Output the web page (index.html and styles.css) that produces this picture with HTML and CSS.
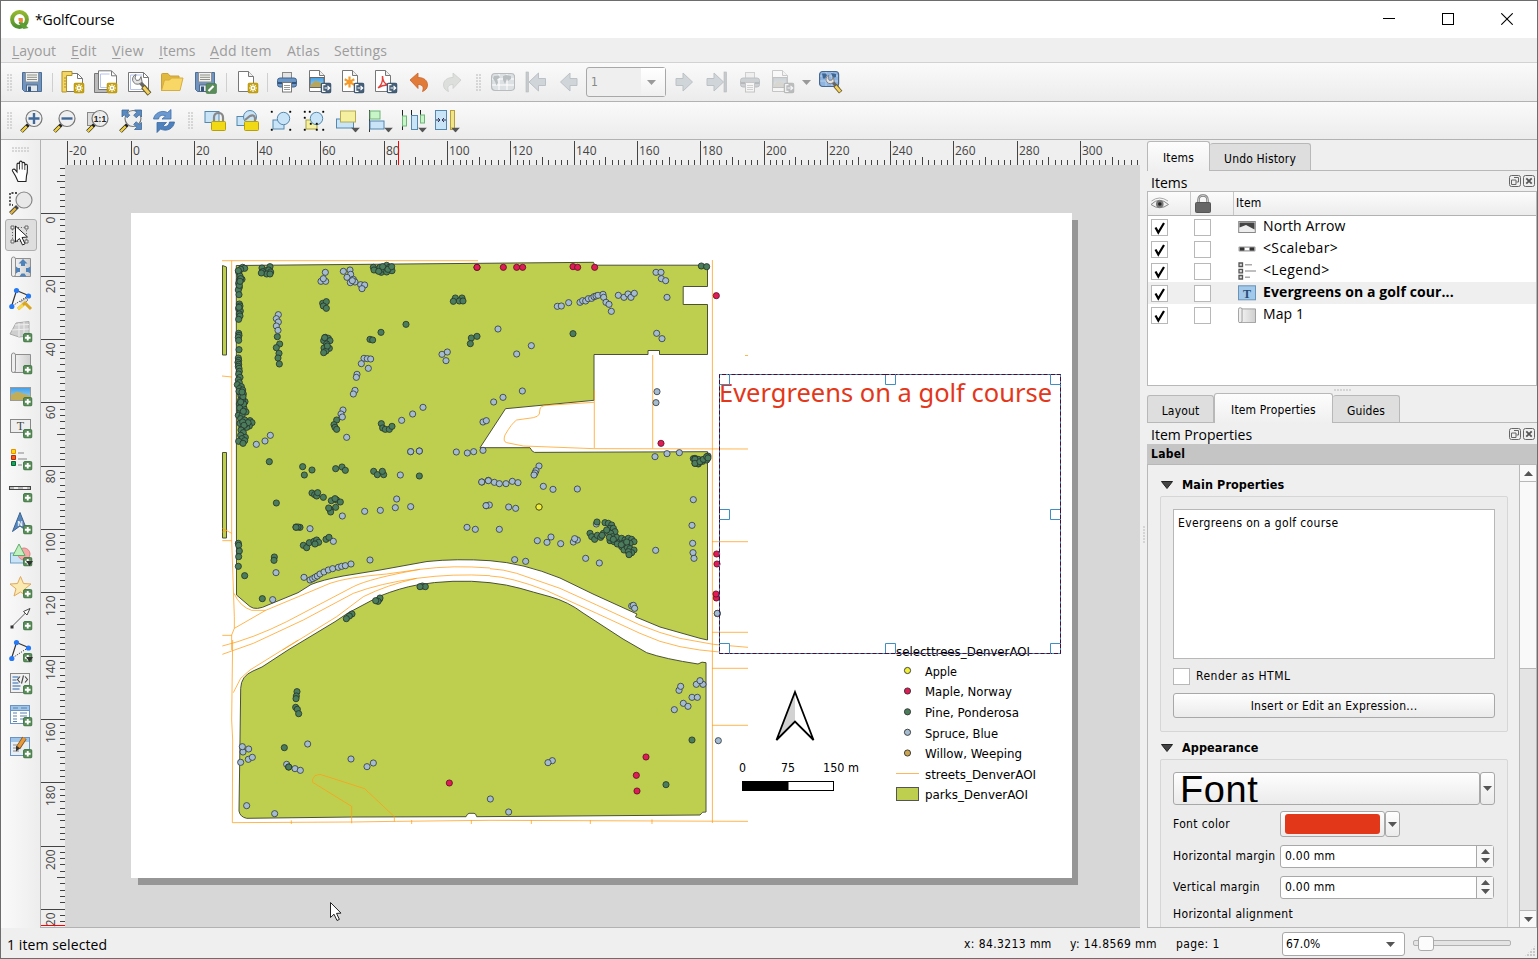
FILE: index.html
```html
<!DOCTYPE html>
<html lang="en">
<head>
<meta charset="utf-8">
<title>*GolfCourse</title>
<link rel="stylesheet" href="styles.css">
</head>
<body>
<svg class="defs" width="0" height="0">
  <defs>
    <linearGradient id="gPaper" x1="0" x2="1"><stop offset="0" stop-color="#f4f4f4"/><stop offset="1" stop-color="#cfcfcf"/></linearGradient>
    <linearGradient id="gSky" x1="0" x2="0" y1="0" y2="1"><stop offset="0" stop-color="#3f9fe8"/><stop offset="1" stop-color="#a8d8f8"/></linearGradient>
    <linearGradient id="gLeaf" x1="0" x2="0" y1="0" y2="1"><stop offset="0" stop-color="#93b82d"/><stop offset="1" stop-color="#4f9030"/></linearGradient>
    <symbol id="plus" viewBox="0 0 10 10"><rect x=".5" y=".5" width="9" height="9" rx="1.6" fill="#5a8c5a" stroke="#3f7744"/><path d="M5 2v6M2 5h6" stroke="#fff" stroke-width="2"/></symbol>
    <symbol id="spark" viewBox="0 0 11 11"><rect x=".5" y=".5" width="10" height="10" rx="1.6" fill="#c8a514" stroke="#b5930a"/><path d="M5.5 1.6v7.8M1.6 5.5h7.8M2.8 2.8l5.4 5.4M8.2 2.8L2.8 8.2" stroke="#fff" stroke-width="1.1"/><circle cx="5.5" cy="5.5" r="2" fill="#fff"/><circle cx="5.5" cy="5.5" r=".9" fill="#c8a514"/></symbol>
    <symbol id="export" viewBox="0 0 11 11"><rect x=".5" y=".5" width="10" height="10" rx="1.8" fill="#46607a" stroke="#36506a"/><path d="M5 2.2H2.2v6.6H5M4 5.5h5M7 3.4l2.2 2.1L7 7.6" stroke="#fff" stroke-width="1.2" fill="none"/></symbol>
    <symbol id="page" viewBox="0 0 24 24"><path d="M4.500 1.500h10l5 5v16h-15z" fill="#fff" stroke="#777"/><path d="M14.500 1.500v5h5" fill="#eee" stroke="#777"/></symbol>
    <symbol id="floppy" viewBox="0 0 24 24"><path d="M2.500 2.500h19v19h-17l-2-2z" fill="#7094bf" stroke="#4d6f96"/><rect x="5.500" y="2.500" width="13" height="9.500" fill="#f1f1ee" stroke="#8b9098"/><path d="M7 5h10M7 7.300h10M7 9.500h10" stroke="#8e8e88"/><rect x="6.500" y="15" width="11" height="6.500" fill="#e3e6ea" stroke="#506c8c"/><rect x="8" y="16.500" width="3" height="5" fill="#35547c"/></symbol>
    <symbol id="printer" viewBox="0 0 24 24"><rect x="7.500" y="2.500" width="9" height="7" fill="#e4e4e4" stroke="#888"/><rect x="2.500" y="8" width="19" height="9" rx="2.500" fill="#6b95c4" stroke="#3f6590"/><path d="M3 13h18" stroke="#34557e" stroke-width="2"/><rect x="7.500" y="12.500" width="9" height="9.500" fill="#fff" stroke="#777"/><path d="M9 15.500h6M9 17.500h6M9 19.500h6" stroke="#999"/></symbol>
    <symbol id="photo" viewBox="0 0 24 24"><rect x="3.500" y="8.500" width="14" height="10" fill="url(#gSky)" stroke="#666"/><path d="M4 16l5-4.500 8 3.500v3H4z" fill="#b8a75a"/></symbol>
    <symbol id="lens" viewBox="0 0 24 24"><path d="M1.500 22.500l7-7" stroke="#222" stroke-width="3.800"/><path d="M1.700 22.300l5-5" stroke="#f0cf3c" stroke-width="2.400"/><circle cx="14" cy="9.500" r="8" fill="#eee" fill-opacity=".88" stroke="#777" stroke-width="1.200"/></symbol>
    <symbol id="arrowL" viewBox="0 0 24 24"><path d="M2.500 12l9.500-9v5.500h7v7h-7V21z" fill="#d0d5d9" stroke="#bcc1c5"/></symbol>
    <symbol id="globe" viewBox="0 0 24 24"><rect x=".6" y="3.500" width="23" height="17" rx="3.500" fill="#dde1e4" stroke="#b9bcbf" stroke-width="1.200"/><path d="M1 9h22M1 15h22M8 4v16M16 4v16" stroke="#fff"/><path d="M3 6l5-.5 1 2-3 2 1 3-1.500 3-1.500-4-2-3zM12 6l3-1 5 1v3l-3 2-1-2-2 5-2-4z" fill="#b9bec1"/></symbol>
    <symbol id="wrench" viewBox="0 0 24 24"><path d="M11 9l8 9" stroke="#666" stroke-width="3.600"/><path d="M15 14.500l6.500 7.500" stroke="#665a28" stroke-width="5"/><path d="M15.500 15l5.500 6.500" stroke="#f3d262" stroke-width="3"/><path d="M8 2.500a5 5 0 1 0 6 7l-1-5-1.500 3.500-3 .5-1.500-2.500z" fill="#e4e4e4" stroke="#777"/></symbol>
    <symbol id="roll" viewBox="0 0 24 24"><path d="M4.500 3.500h17v18h-17z" fill="url(#gPaper)" stroke="#8f8f8f"/><path d="M2.500 20V4q0-2 2-2t2 2v15.500q0 2-2 2t-2-1.500z" fill="#eee" stroke="#8f8f8f"/></symbol>
    <symbol id="nodes" viewBox="0 0 24 24"><path d="M2.500 19.500L7.500 3.500 19.500 8.500" fill="none" stroke="#333" stroke-width="1.200"/><path d="M2.500 19.500l17-11" stroke="#222" stroke-dasharray="1 1.300"/><g fill="#2579f5"><circle cx="2.800" cy="19.500" r="2.600"/><circle cx="7.500" cy="3.500" r="2.600"/><circle cx="19.500" cy="9" r="2.600"/></g></symbol>
    <symbol id="drop" viewBox="0 0 9 5"><path d="M0 0h9L4.500 5z" fill="#555"/></symbol>
    <symbol id="check" viewBox="0 0 17 17"><path d="M4.500 8.500l2.800 5L13 4" fill="none" stroke="#000" stroke-width="2.200"/></symbol>
    <marker id="mPine" markerUnits="userSpaceOnUse" markerWidth="24" markerHeight="24" refX="12" refY="12"><circle cx="12" cy="12" r="9.300" fill="#4b7c5b" stroke="#26332c" stroke-width="2.400"/></marker>
    <marker id="mSpruce" markerUnits="userSpaceOnUse" markerWidth="24" markerHeight="24" refX="12" refY="12"><circle cx="12" cy="12" r="9.300" fill="#a5bbd0" stroke="#2e3940" stroke-width="2.400"/></marker>
    <marker id="mMaple" markerUnits="userSpaceOnUse" markerWidth="24" markerHeight="24" refX="12" refY="12"><circle cx="12" cy="12" r="9.300" fill="#e01b55" stroke="#551326" stroke-width="2.400"/></marker>
    <marker id="mApple" markerUnits="userSpaceOnUse" markerWidth="24" markerHeight="24" refX="12" refY="12"><circle cx="12" cy="12" r="9.300" fill="#f0ef35" stroke="#4a4a1c" stroke-width="2.400"/></marker>
  </defs>
</svg>

<div class="window">
  <header class="titlebar">
    <svg class="logo" viewBox="0 0 20 20"><circle cx="9.500" cy="9.500" r="7.400" fill="none" stroke="url(#gLeaf)" stroke-width="4"/><path d="M10.500 10.500l8 7.500-5 1-5-6z" fill="#5f9e33"/><path d="M8.500 8h4.200l.3 3.500-2 1.500-2.500-2.500z" fill="#f0883a"/></svg>
    <span class="title">*GolfCourse</span>
    <span class="winbtns">
      <svg viewBox="0 0 12 12"><path d="M0 5.500h12" stroke="#000"/></svg>
      <svg viewBox="0 0 12 12"><rect x=".5" y=".5" width="11" height="11" fill="none" stroke="#000"/></svg>
      <svg viewBox="0 0 12 12"><path d="M.3.3l11.400 11.400M11.700.3L.3 11.700" stroke="#000" stroke-width="1.100"/></svg>
    </span>
  </header>
  <nav class="menubar">
    <span class="m1"><u>L</u>ayout</span><span class="m2"><u>E</u>dit</span><span class="m3"><u>V</u>iew</span><span class="m4"><u>I</u>tems</span><span class="m5"><u>A</u>dd Item</span><span class="m6">Atlas</span><span class="m7">Settings</span>
  </nav>

  <div class="toolbar tb1">
    <i class="grip"></i>
    <svg class="ic" viewBox="0 0 24 24"><use href="#floppy"/></svg>
    <i class="sep s8"></i>
    <svg class="ic" viewBox="0 0 24 24"><path d="M4.500 3.500h12l5 5v13h-17z" fill="#fff" stroke="#777"/><path d="M16.500 3.500v5h5" fill="none" stroke="#777"/><path d="M1 1.500h10v4H5.500V22H1z" fill="#f2d66a" stroke="#b39322"/><path d="M3 8h2M3 11h2M3 14h2M3 17h2" stroke="#b39322"/><use href="#spark" x="12.500" y="12.500" width="11" height="11"/></svg>
    <svg class="ic" viewBox="0 0 24 24"><path d="M.5 3.500h18v19H.5z" fill="#bbb" stroke="#777"/><path d="M4.500.8h13l5 5v13.700h-18z" fill="#fff" stroke="#777"/><path d="M17.500.8v5h5" fill="none" stroke="#777"/><path d="M6.500 4h9M6.500 4v13.500h14" stroke="#b6c4ee" fill="none"/><use href="#spark" x="12.500" y="12.500" width="11" height="11"/></svg>
    <svg class="ic" viewBox="0 0 24 24"><path d="M1.500 2.500h15l5 5v14h-20z" fill="#fff" stroke="#777"/><path d="M16.500 2.500v5h5" fill="none" stroke="#777"/><path d="M3.500 5h12M3.500 5v14.500h16" stroke="#b6c4ee" fill="none"/><use href="#wrench" x="1" y="2"/></svg>
    <svg class="ic" viewBox="0 0 24 24"><path d="M1.500 21V4.500q0-1 1-1H8l2 2.500h9v4" fill="#e2b93f" stroke="#caa136"/><path d="M1.500 20.500L4.500 10h5l2-2H23l-3 12.500z" fill="#f9d767" stroke="#d6ad40"/></svg>
    <svg class="ic" viewBox="0 0 24 24"><use href="#floppy"/><rect x="13" y="13.500" width="10.500" height="10" rx="1.500" fill="#5a8c5a" stroke="#3f7744" stroke-width=".6"/><path d="M15.500 21l5-5" stroke="#fff" stroke-width="2.200"/></svg>
    <i class="sep s10"></i>
    <svg class="ic" viewBox="0 0 24 24"><path d="M2.500 1.500h10l5 5v15h-15z" fill="#fff" stroke="#777"/><path d="M12.500 1.500v5h5" fill="#eee" stroke="#777"/><use href="#spark" x="11.500" y="12.500" width="11" height="11"/></svg>
    <i class="sep s6"></i>
    <svg class="ic" viewBox="0 0 24 24"><use href="#printer"/></svg>
    <svg class="ic" viewBox="0 0 24 24"><use href="#page" x="-3" y="-1"/><use href="#photo" x="-1.500" y="-1"/><use href="#export" x="12.500" y="12.500" width="11" height="11"/></svg>
    <svg class="ic" viewBox="0 0 24 24"><use href="#page" x="-3" y="-1"/><path d="M8.500 6.500v11M3.700 9.200l9.600 5.600M13.300 9.200l-9.600 5.600" stroke="#f39a2b" stroke-width="2.200"/><use href="#export" x="12.500" y="12.500" width="11" height="11"/></svg>
    <svg class="ic" viewBox="0 0 24 24"><use href="#page" x="-3" y="-1"/><path d="M4 18c3-2 5-7 4.500-12 0 5 2 8 6 9-4-.5-7 .5-10.500 3" fill="none" stroke="#e2403a" stroke-width="1.500"/><use href="#export" x="12.500" y="12.500" width="11" height="11"/></svg>
    <svg class="ic" viewBox="0 0 24 24"><path d="M3 10l8-7v4.500c6 0 9.500 3 9.500 7.500 0 3-2 5.500-5 6.500 1.500-4 .5-7-4.500-7v4z" fill="#e07b39" stroke="#c9652a" stroke-width=".8"/></svg>
    <svg class="ic" viewBox="0 0 24 24"><path d="M21 10l-8-7v4.500c-6 0-9.500 3-9.500 7.500 0 3 2 5.500 5 6.500-1.500-4-.5-7 4.500-7v4z" fill="#dcdfdc" stroke="#cccfcc" stroke-width=".8"/></svg>
    <i class="grip mid"></i>
    <svg class="ic" viewBox="0 0 24 24"><use href="#globe"/></svg>
    <svg class="ic" viewBox="0 0 24 24"><rect x="2" y="2" width="2.500" height="20" fill="#c6cacd" stroke="#b4b8bb" stroke-width=".6"/><use href="#arrowL" x="2.500"/></svg>
    <svg class="ic" viewBox="0 0 24 24"><use href="#arrowL" x="1"/></svg>
    <span class="pagebox"><b>1</b><em><svg class="car" viewBox="0 0 9 5"><path d="M0 0h9L4.500 5z" fill="#9a9a9a"/></svg></em></span>
    <svg class="ic" viewBox="0 0 24 24"><use href="#arrowL" transform="translate(23 0) scale(-1 1)"/></svg>
    <svg class="ic" viewBox="0 0 24 24"><use href="#arrowL" transform="translate(21 0) scale(-1 1)"/><rect x="19" y="2" width="2.500" height="20" fill="#c6cacd" stroke="#b4b8bb" stroke-width=".6"/></svg>
    <svg class="ic faded" viewBox="0 0 24 24"><use href="#printer"/></svg>
    <svg class="ic faded" viewBox="0 0 24 24"><use href="#page" x="-3" y="-1"/><use href="#photo" x="-1.500" y="-1"/><use href="#export" x="12.500" y="12.500" width="11" height="11"/></svg>
    <span class="dd"><svg class="car" viewBox="0 0 9 5"><path d="M0 0h9L4.500 5z" fill="#999"/></svg></span>
    <svg class="ic" viewBox="0 0 24 24"><rect x=".6" y="1.500" width="19" height="15" rx="3" fill="#8fb4e0" stroke="#48698f" stroke-width="1.200"/><path d="M1 6h18M1 11h18M7 2v14M13 2v14" stroke="#c9dcf3" stroke-width=".7"/><path d="M3 3.500l4 0 1 2-2 3-2 0zM12 3l5 1v3l-3 1z" fill="#3f6793"/><g transform="translate(3 3) scale(.87)"><use href="#wrench" width="24" height="24"/></g></svg>
  </div>

  <div class="toolbar tb2">
    <i class="grip"></i>
    <svg class="ic" viewBox="0 0 24 24"><use href="#lens"/><path d="M14 4v11M8.500 9.500h11" stroke="#40699a" stroke-width="2.400"/></svg>
    <svg class="ic" viewBox="0 0 24 24"><use href="#lens"/><path d="M8.500 9.500h11" stroke="#40699a" stroke-width="2.400"/></svg>
    <svg class="ic" viewBox="0 0 24 24"><rect x="1.500" y="3.500" width="12" height="13" fill="#ddd" stroke="#888"/><use href="#lens"/><text x="14" y="13" class="ratio">1:1</text></svg>
    <svg class="ic" viewBox="0 0 24 24"><use href="#lens"/><g fill="#5b8ac0" stroke="#3f6898" stroke-width=".8"><path d="M3 1h7L7.800 3.200l3 3-2.600 2.600-3-3L3 8z"/><path d="M22.500 1v7l-2.200-2.200-3 3-2.600-2.600 3-3L15.500 1z"/><path d="M22.500 20.500h-7l2.200-2.200-3-3 2.600-2.600 3 3 2.200-2.200z"/></g></svg>
    <svg class="ic" viewBox="0 0 24 24"><path d="M1.500 10c1-6 8-9.500 14-6.500l3.500-3V10h-9l3.500-3C10 5 7 7 6.500 10z" fill="#6c9ad0" stroke="#3e6fab" stroke-width=".8"/><path d="M22.500 13c-1 7-8 10-14 7L5 23.500V13.500h9.500L11 17c3 1.500 6-.5 6.500-4z" fill="#4d80bd" stroke="#3a69a2" stroke-width=".8"/></svg>
    <i class="grip mid"></i>
    <svg class="ic" viewBox="0 0 24 24"><rect x="2" y="2.500" width="14" height="11" fill="#c9e3f7" stroke="#5588ad"/><path d="M11 13v-4.500q0-4.500 4.500-4.500t4.500 4.500V13" fill="none" stroke="#888" stroke-width="2.200"/><rect x="8.500" y="12.500" width="14" height="9" rx="1" fill="#f1d916" stroke="#b79f12"/></svg>
    <svg class="ic" viewBox="0 0 24 24"><rect x="1" y="7.500" width="12" height="9" fill="#c9e3f7" stroke="#5588ad"/><circle cx="14" cy="8" r="6.500" fill="#c9e3f7" stroke="#5588ad"/><path d="M9 11l5-4q4-2 5 2V13" fill="none" stroke="#888" stroke-width="2.200"/><rect x="8.500" y="12.500" width="14" height="9" rx="1" fill="#f1d916" stroke="#b79f12"/></svg>
    <svg class="ic" viewBox="0 0 24 24"><rect x="4" y="11" width="11" height="9" fill="#c9e3f7" stroke="#5588ad"/><circle cx="14.500" cy="9.500" r="6.200" fill="#c9e3f7" stroke="#5588ad"/><path d="M2 2h1.500v1.500H2zM20.500 2H22v1.500h-1.500zM2 20h1.500v1.500H2zM20.500 20H22v1.500h-1.500z" stroke="#111" stroke-width=".4"/></svg>
    <svg class="ic" viewBox="0 0 24 24"><rect x="4" y="11" width="11" height="9" fill="#f5f0a0" stroke="#a8a040"/><circle cx="14.500" cy="9.500" r="6.200" fill="#c9e3f7" stroke="#5588ad"/><path d="M2 2h1.500v1.500H2zM7 2h1.500v1.500H7zM20.500 2H22v1.500h-1.500zM2 20h1.500v1.500H2zM20.500 20H22v1.500h-1.500zM2 8h1.500v1.500H2zM14 14h1.500v1.500H14zM8 14h1.500v1.500H8zM14 20h1.500v1.500H14z" stroke="#111" stroke-width=".4"/></svg>
    <svg class="ic" viewBox="0 0 24 24"><rect x="1.500" y="10" width="17" height="9" fill="#c9e3f7" stroke="#5588ad"/><rect x="5.500" y="2" width="15" height="11" fill="#f5f0a0" stroke="#b5ad55"/><use href="#drop" x="16" y="18.500" width="9" height="5"/></svg>
    <svg class="ic" viewBox="0 0 24 24"><path d="M1.500 1v22" stroke="#333"/><rect x="2" y="2" width="10" height="8" fill="#c8f5c8" stroke="#6fb47a"/><rect x="2" y="12" width="14" height="8" fill="#c9e3f7" stroke="#5588ad"/><use href="#drop" x="16" y="18.500" width="9" height="5"/></svg>
    <svg class="ic" viewBox="0 0 24 24"><path d="M1.500 1v20M10.500 1v6M19.500 1v5" stroke="#222"/><rect x="1.500" y="7" width="4" height="10" fill="#c8f5c8" stroke="#6fb47a"/><rect x="10.500" y="6.500" width="6" height="14" fill="#c9e3f7" stroke="#5588ad"/><rect x="19.500" y="6" width="4" height="8" fill="#c8f5c8" stroke="#6fb47a"/><use href="#drop" x="17" y="18.500" width="9" height="5"/></svg>
    <svg class="ic" viewBox="0 0 24 24"><rect x="1.500" y="1.500" width="11" height="19" fill="#c9e3f7" stroke="#5588ad"/><path d="M2 11h4M4 9l2 2-2 2M12 11H8M10 9l-2 2 2 2" stroke="#335" fill="none"/><rect x="16.500" y="1.500" width="4" height="19" fill="#f0e58a" stroke="#b5a03a"/><use href="#drop" x="17" y="18.500" width="9" height="5"/></svg>
  </div>

  <div class="main">
    <aside class="tools">
      <i class="hgrip"></i>
      <span class="tool"><svg viewBox="0 0 24 24"><path d="M9 22.500L6.500 17 3.500 12c-.8-1.500 1.700-2.500 2.800-1.200L8 13V5.500c0-1.900 2.300-1.900 2.500 0V3.500c.2-1.900 2.500-1.700 2.700 0v1c.3-1.600 2.500-1.500 2.600.3v1.500c.5-1.500 2.500-1.300 2.600.4 0 4 .3 7-.9 10L17 22.500z" fill="#fff" stroke="#222" stroke-width="1.100"/><path d="M10.500 5.500v5M13.200 4.500v6M15.800 6v5" stroke="#333" stroke-width=".9"/></svg></span>
      <span class="tool"><svg viewBox="0 0 24 24"><path d="M8 2H1v12h3" fill="none" stroke="#111" stroke-dasharray="2 1.500" stroke-width="1.300"/><path d="M1.500 22.500l7-7" stroke="#444" stroke-width="4"/><path d="M1.700 22.300l5-5" stroke="#e0b53c" stroke-width="2.400"/><circle cx="15" cy="9" r="8" fill="#e9e9e9" stroke="#888" stroke-width="1.200"/></svg></span>
      <span class="tool on"><svg viewBox="0 0 24 24"><rect x="3.500" y="4.500" width="14" height="14" fill="none" stroke="#555" stroke-dasharray="1 1.800"/><path d="M2 3h3v3H2zM16 3h3v3h-3zM2 17h3v3H2zM16 17h3v3h-3z" fill="#eee" stroke="#666"/><path d="M6.500 3v16l4-3.500 3 6.500 2.500-1.200-3-6.300 5.500-.5z" fill="#fff" stroke="#222"/></svg></span>
      <span class="tool"><svg viewBox="0 0 24 24"><use href="#roll"/><g fill="#4e82b8"><path d="M14 4l4.500 4.500H16V11h-4V8.500H9.500zM7 11.500l2 1.500h2v4H9l-2 1.500zM21.500 11.500L19 13h-2v4h2l2.500 1.500zM10.500 21.500l2-3h3l2 3z"/></g></svg></span>
      <span class="tool"><svg viewBox="0 0 24 24"><use href="#nodes"/><path d="M11 15l6-4 2 2-5 5" fill="#ddd" stroke="#888"/><path d="M9 22l7-6 6 6" fill="none" stroke="#d9a520" stroke-width="3"/><path d="M9 22l5-4" stroke="#f6d74e" stroke-width="3"/></svg></span>
      <span class="tool"><svg viewBox="0 0 24 24"><path d="M1 15L7 4l13-1.500V17l-10 1z" fill="#cfcfcf" stroke="#aaa"/><path d="M3 11l17-1M6 6l14-.5M10 4v14M15 3v14" stroke="#eee" fill="none"/><use href="#plus" x="14" y="14" width="9.500" height="9.500"/></svg></span>
      <span class="tool"><svg viewBox="0 0 24 24"><use href="#roll"/><use href="#plus" x="14" y="14" width="9.500" height="9.500"/></svg></span>
      <span class="tool"><svg viewBox="0 0 24 24"><rect x="1.500" y="4.500" width="20" height="13" fill="url(#gSky)" stroke="#999"/><path d="M2 12l6-3.500 13.500 4.500v4H2z" fill="#c2ad59"/><use href="#plus" x="14" y="14" width="9.500" height="9.500"/></svg></span>
      <span class="tool"><svg viewBox="0 0 24 24"><rect x="1.500" y="4.500" width="20" height="13" fill="#eee" stroke="#888"/><text x="11.500" y="15" class="tglyph">T</text><use href="#plus" x="14" y="14" width="9.500" height="9.500"/></svg></span>
      <span class="tool"><svg viewBox="0 0 24 24"><path d="M2.500 2.500h4v4h-4z" fill="#fddb0b" stroke="#e89000"/><path d="M2.500 8.500h4v4h-4z" fill="#f25a15" stroke="#b72c08"/><path d="M2.500 14.500h4v4h-4z" fill="#17a45c" stroke="#0b6333"/><path d="M9 6h6M9 12h9M9 18h4" stroke="#aaa" stroke-width="1.500"/><use href="#plus" x="14" y="14" width="9.500" height="9.500"/></svg></span>
      <span class="tool"><svg viewBox="0 0 24 24"><rect x=".5" y="7.500" width="21" height="3" fill="#bbb" stroke="#444"/><path d="M5 9h4M14 9h4" stroke="#fff" stroke-width="1.500"/><use href="#plus" x="14" y="14" width="9.500" height="9.500"/></svg></span>
      <span class="tool"><svg viewBox="0 0 24 24"><path d="M11 1.500l7.500 19L11 15l-7.500 5.500z" fill="#5a87bb" stroke="#3a6391"/><text x="11" y="14.500" class="nglyph">N</text><use href="#plus" x="14" y="14" width="9.500" height="9.500"/></svg></span>
      <span class="tool"><svg viewBox="0 0 24 24"><rect x="1.500" y="10" width="13" height="10" fill="#c9e3f7" stroke="#6ea0c4"/><circle cx="15" cy="11" r="6" fill="#f6a8a8" stroke="#d98282"/><path d="M10 1l6 11.500H4z" fill="#c0f0c0" stroke="#62ac6c"/><use href="#plus" x="14" y="14" width="9.500" height="9.500"/><path d="M17 18h7l-3.500 5z" fill="#333"/></svg></span>
      <span class="tool"><svg viewBox="0 0 24 24"><path d="M11.500 1.500l3 7 7.500.5-6 4.800 2 7.200-6.500-4-6.500 4 2-7.200L1 9l7.500-.5z" fill="#fae9b0" stroke="#e0a95c"/><use href="#plus" x="14" y="14" width="9.500" height="9.500"/></svg></span>
      <span class="tool"><svg viewBox="0 0 24 24"><path d="M2.500 20L19 3.500" stroke="#555"/><path d="M21 1.500l-6.500 3 3.500 3.500z" fill="#fff" stroke="#444"/><rect x="1.500" y="18.500" width="3" height="3" fill="#333"/><use href="#plus" x="14" y="14" width="9.500" height="9.500"/></svg></span>
      <span class="tool"><svg viewBox="0 0 24 24"><use href="#nodes"/><use href="#plus" x="14" y="14" width="9.500" height="9.500"/><path d="M17 18h7l-3.500 5z" fill="#333"/></svg></span>
      <span class="tool"><svg viewBox="0 0 24 24"><rect x="1.500" y="2.500" width="19" height="19" fill="#f1f1f1" stroke="#888"/><path d="M3.500 6h6M3.500 9h4M3.500 12h6M3.500 15h8M3.500 18h7" stroke="#6a93c4" stroke-width="1.700"/><path d="M11 5.500L8.500 8.500l2.500 3M16 5.500l2.500 3-2.500 3M14.500 4.500l-2 8" fill="none" stroke="#444" stroke-width="1.100"/><use href="#plus" x="14" y="14" width="9.500" height="9.500"/></svg></span>
      <span class="tool"><svg viewBox="0 0 24 24"><rect x="1.500" y="2.500" width="19" height="18" fill="#fff" stroke="#6a93c4"/><rect x="2" y="3" width="18" height="4" fill="#9fc6e8"/><path d="M2 7.500h18" stroke="#6a93c4"/><path d="M4 5h5M12 5h6M4 10h4M11 10h7M4 13h4M11 13h7M4 16h4M11 16h4M4 18.500h4" stroke="#5c82ad" stroke-width="1.200"/><use href="#plus" x="14" y="14" width="9.500" height="9.500"/></svg></span>
      <span class="tool"><svg viewBox="0 0 24 24"><rect x="1.500" y="2.500" width="19" height="18" fill="#e9eef3" stroke="#6a93c4"/><rect x="2" y="3" width="18" height="4" fill="#9fc6e8"/><path d="M4 10h5M4 13h4M4 16h6" stroke="#888"/><path d="M15.500 3L9 13" stroke="#80501c" stroke-width="5"/><path d="M15.500 3L9.500 12" stroke="#e69a3c" stroke-width="3.200"/><path d="M7 11l4 2.500-4 3z" fill="#333"/><use href="#plus" x="14" y="14" width="9.500" height="9.500"/></svg></span>
    </aside>

    <section class="stage">
      <svg class="ruler-h" id="rulerH" viewBox="41 140 1099 25"></svg>
      <svg class="ruler-v" id="rulerV" viewBox="41 165 24 763"></svg>
      <svg class="canvas" viewBox="65 165 1075 763">
        <rect x="138" y="220" width="940" height="665" fill="#969696"/>
        <rect x="131" y="213" width="941" height="665" fill="#fff"/>
        <g class="park">
          <path d="M236.300 265.500L481 263.300 593.500 262.300 594.500 265.200H707.500V286.500H683.200V304.500H707.500V354.500H659.500V350.500H648V354.500H594V400.300L505.500 408.700 480 447.700H530Q532 452 534.500 452.400L707.500 451.700V640L700 638.300 660 627 635.500 616.800 637 614 593 594 560 578Q523 563 490 560.700T427 561.500L380 570 343 576Q322 580 311 584.500L298 592.700 268 605Q256 611 250 606.500L236.500 595Z"/>
          <path d="M288 650L335 621.700 348 613 380 596Q400 588 417 585T453 581.300 490 582.700 520 588.300 550 596.700 583 613L623 639 646.700 652.700Q665 659 698 664Q702 661 706 662.700V812Q702 811 700 815L476.700 816.700Q476 813.300 474 813.300H469Q467 814 466 816.700L353 817 246.700 818.300Q240 817 239 811L240 740 240.700 688.300Q241 676 253 671L262 667Z"/>
          <path d="M222.500 265.500L226.500 267V355H222.500ZM222.500 452.500H226.500V538H222.500Z"/>
        </g>
        <g class="street">
          <path d="M222 260.700H478M712.400 260V823M594.300 390V448M652.700 355V448.500M712 541.700H748M712 632.300H748M712 668.300H748M712 725.300H748M745 355.500H748M222 376L232 377"/>
          <g transform="translate(480 250) scale(.33333)"><path d="M342 457L200 466Q180 468 180 478L178 492Q175 500 160 503L110 510Q95 520 75 555Q68 575 80 578L130 588 342 596 804 597"/></g>
          <g transform="translate(220 450) scale(.33333)"><path d="M35-568V270L43 500V535L35 555V600M42 430Q60 470 95 481H137L235 440 330 400Q380 382 500 372L600 358Q700 345 810 354M7 588Q100 565 200 515L400 410Q450 385 600 358M7 613L100 580 250 510 400 430Q480 400 590 385T810 377M188 600L350 500 430 440Q500 405 590 385M43 535L137 481M7 556H35M7 272H35M7 235L35 250M7 246L22 240"/></g>
          <g transform="translate(480 450) scale(.33333)"><path d="M30 356Q70 358 110 370L240 415 350 465 480 525Q540 550 600 565L700 583 804 592M30 378Q90 380 200 422L350 490 480 550Q540 578 600 590T718 606"/></g>
          <g transform="translate(220 640) scale(.33333)"><path d="M38 0L35 240 38 300 37 548 400 546 530 544 810 541 1584 544M40 158L62 115 90 90 235 0M278 427Q274 418 285 407L300 403 434 446 523 530V545M278 427L395 499V550M214 541V552M575 540V552M754 540V552M934 540V552M1111 540V552M1296 538V552"/></g>
        </g>
        <g transform="translate(220 250) scale(.33333)" class="trees">
          <polyline class="pine" points="68,52 74,55 62,58 56,66 66,88 60,78 55,62 58,90 62,86 56,100 58,112 55,120 57,134 58,106 60,94 58,162 60,168 56,176 61,183 58,192 60,198 57,172 56,208 56,250 57,256 55,262 56,271 57,299 55,324 56,331 54,337 56,343 55,349 57,355 58,364 56,372 60,382 55,390 58,398 52,404 64,410 58,416 68,420 60,428 70,432 63,438 75,455 62,450 68,446 58,462 65,468 72,475 60,482 78,486 55,496 66,497 57,424 69,440 66,426 71,462 62,456 59,474 70,484 62,506 74,510 90,512 96,518 88,528 80,532 66,530 76,522 84,518 60,520 68,516 72,526 63,540 70,548 62,556 76,562 66,566 74,572 56,574 69,580"/>
          <polyline class="pine" points="126,54 138,62 150,50 146,60 152,66 128,65 140,72 150,72 124,69 308,160 319,155 310,168 319,175 172,260 179,282 169,293 177,310 174,324 178,342 316,262 325,265 330,272 311,272 320,282 328,295 312,294 318,303 311,308 322,288 314,263 450,268 458,270 483,247 558,223 706,144 726,144 718,153 729,153 700,154 754,264 771,259 751,281 350,510 342,524 345,532 350,538 484,521 488,534 496,538 508,538 516,529 460,52 470,60 480,52 484,67 492,58 500,46 508,52 512,60 500,66 516,62 462,60 476,64 488,50 504,58 515,50"/>
          <polyline class="spruce" points="316,67 303,94 317,94 310,86 370,64 390,60 392,73 381,82 400,88 405,96 391,98 397,92 422,104 434,105 426,116 175,194 169,206 175,216 169,228 174,241 432,325 442,326 452,327 424,341 445,355 411,373 409,382 405,421 400,432 369,480 363,492 367,501 380,562 545,511 578,492 609,472 109,583 135,573 151,556 572,605 598,603 709,606 742,609 761,605 789,516 799,512 789,601 666,313 682,306 678,332"/>
          <polyline class="maple" points="771,52 771,52"/>
        </g>
        <g transform="translate(480 250) scale(.33333)" class="trees">
          <polyline class="maple" points="70,52 110,52 128,52 279,50 293,52 344,52 709,137 543,580"/>
          <polyline class="pine" points="664,48 680,50 279,251 640,626 650,632 645,640 660,630 655,642 668,634 676,628 682,624 684,618 680,630 645,625 654,628"/>
          <polyline class="spruce" points="528,67 543,67 544,86 557,92 561,142 530,250 546,266 232,169 244,168 266,158 300,157 308,152 317,153 325,146 335,145 342,140 348,138 354,136 369,133 371,142 378,157 387,163 394,184 415,136 432,142 444,132 453,142 463,130 54,237 154,287 110,312 127,423 69,442 41,456 531,425 528,458 525,620 561,611 598,608"/>
        </g>
        <g transform="translate(220 450) scale(.33333)" class="trees">
          <polyline class="pine" points="148,35 248,50 276,60 253,75 347,56 366,51 376,61 461,64 472,74 491,74 487,64 598,78 169,159 276,129 284,134 290,138 293,128 310,142 334,152 350,150 361,156 345,146 347,172 330,178 332,186 326,174 228,231 240,232 234,231 228,232 55,280 56,286 58,303 56,320 55,349 74,377 127,446 163,321 162,331 250,286 260,293 268,278 282,274 290,270 296,277 285,282 318,268 327,262 607,408 616,410 600,410 478,448 480,444 474,454 467,452 396,492 388,498 379,506"/>
          <polyline class="spruce" points="541,75 530,147 526,173 572,170 481,181 434,184 367,198 270,236 340,274 450,330 168,368 252,382 158,449 270,390 278,386 285,382 292,378 300,372 312,366 325,360 338,356 355,352 365,349 376,347 393,342 741,232 766,238 786,96 805,91 799,167 572,5 598,3"/>
        </g>
        <g transform="translate(480 450) scale(.33333)" class="trees">
          <polyline class="spruce" points="177,48 168,62 165,69 162,75 25,92 43,97 58,101 78,101 97,94 114,98 190,109 219,118 292,117 28,165 18,167 86,171 107,175 58,238 172,272 201,277 213,261 242,281 280,276 292,270 284,266 317,325 358,339 527,301 640,149 636,226 638,280 639,308 642,325 104,329 137,334 455,468 460,466 464,475 712,491 712,490 349,222 5,96"/>
          <polyline class="apple" points="177,171 177,171"/>
          <polyline class="pine" points="351,216 375,218 385,220 395,225 390,235 400,235 405,245 392,250 330,250 335,260 344,268 352,256 362,262 370,250 380,240 398,260 390,272 402,275 410,262 420,275 425,265 435,270 445,265 455,268 462,275 450,280 440,285 425,290 432,300 442,292 450,296 462,300 455,308 445,305 447,314 388,262 400,268 412,282 430,280 424,284 440,276 366,256 645,28 655,40 645,40 660,35 670,28 680,20 684,24"/>
          <polyline class="maple" points="710,312 711,342 709,444 708,432"/>
        </g>
        <g transform="translate(220 640) scale(.33333)" class="trees">
          <polyline class="pine" points="231,155 229,168 228,176 227,202 232,208 236,221 193,323"/>
          <polyline class="spruce" points="263,312 69,336 67,320 86,327 85,358 97,352 62,367 393,357 441,380 460,369 200,373 225,386 241,391 80,497 164,521 811,477 866,516 997,362 984,368 1377,151 1382,139 1449,133 1429,133 1440,122 1416,172 1432,172 1390,190 1404,199 1363,209 1495,302"/>
          <polyline class="pine" points="206,381 206,381 1416,300 1338,434"/>
          <polyline class="maple" points="688,429 1278,351 1249,406 1251,453"/>
        </g>
        <!-- title label -->
        <text x="719" y="402" class="maptitle" textLength="333" lengthAdjust="spacingAndGlyphs">Evergreens on a golf course</text>
        <!-- north arrow -->
        <path d="M795 692V721.500L777 740Z" fill="#d2d2d2"/>
        <path d="M795 692L813.500 740 795 721.500 776.500 740Z" fill="none" stroke="#000" stroke-width="1.800"/>
        <!-- scale bar -->
        <g class="maptext"><text x="739" y="772" textLength="7" lengthAdjust="spacingAndGlyphs">0</text><text x="781" y="772" textLength="14" lengthAdjust="spacingAndGlyphs">75</text><text x="823" y="772" textLength="36" lengthAdjust="spacingAndGlyphs">150 m</text></g>
        <rect x="742.500" y="781.500" width="91" height="9" fill="#fff" stroke="#000"/><rect x="742.500" y="781.500" width="46" height="9"/>
        <!-- legend -->
        <g class="maptext">
          <text x="896" y="656" textLength="134" lengthAdjust="spacingAndGlyphs">selecttrees_DenverAOI</text>
          <text x="925" y="676" textLength="32" lengthAdjust="spacingAndGlyphs">Apple</text>
          <text x="925" y="696" textLength="87" lengthAdjust="spacingAndGlyphs">Maple, Norway</text>
          <text x="925" y="717" textLength="94" lengthAdjust="spacingAndGlyphs">Pine, Ponderosa</text>
          <text x="925" y="738" textLength="73" lengthAdjust="spacingAndGlyphs">Spruce, Blue</text>
          <text x="925" y="758" textLength="97" lengthAdjust="spacingAndGlyphs">Willow, Weeping</text>
          <text x="925" y="779" textLength="111" lengthAdjust="spacingAndGlyphs">streets_DenverAOI</text>
          <text x="925" y="799" textLength="103" lengthAdjust="spacingAndGlyphs">parks_DenverAOI</text>
        </g>
        <g stroke="#333" stroke-width=".9"><circle cx="907.500" cy="670.500" r="3.100" fill="#f0ef35"/><circle cx="907.500" cy="691" r="3.100" fill="#e01b55"/><circle cx="907.500" cy="711.800" r="3.100" fill="#4b7c5b"/><circle cx="907.500" cy="732.300" r="3.100" fill="#a5bbd0"/><circle cx="907.500" cy="753" r="3.100" fill="#cba551"/></g>
        <path d="M896 773.500H919" stroke="#ffb65c"/>
        <rect x="896.500" y="787.500" width="22" height="13" fill="#becf50" stroke="#555"/>
        <!-- selection frame and handles -->
        <rect x="719.500" y="374.500" width="341" height="279" fill="none" stroke="#3d8fc4"/>
        <rect x="719.500" y="374.500" width="341" height="279" fill="none" stroke="#4a0a3c" stroke-dasharray="4 2"/>
        <path class="handles" d="M719.500 374.500h10v10h-10zM885.500 374.500h10v10h-10zM1050.500 374.500h10v10h-10zM719.500 509.500h10v10h-10zM1050.500 509.500h10v10h-10zM719.500 643.500h10v10h-10zM885.500 643.500h10v10h-10zM1050.500 643.500h10v10h-10z"/>
        <path d="M719.500 384V374.500H729M1051 374.500H1060.500V384M1060.500 644V653.500H1051M729 653.500H719.500V644M885 374.500H896M719.500 509V520M1060.500 509V520M885 653.500H896" fill="none" stroke="#4a0a3c" stroke-dasharray="4 2"/>
        <!-- mouse pointer -->
        <path d="M330.500 902.500v15l3.500-3.300 3 6.300 2.400-1.100-2.900-6 4.500-.3z" fill="#fff" stroke="#222"/>
        <path d="M65 927.500H1140" stroke="#b2b2b2"/>
      </svg>
    </section>

    <div class="vsplit"><i></i></div>

    <aside class="dock">
      <div class="tabs t-top"><span class="tab cur w62">Items</span><span class="tab w102">Undo History</span></div>
      <div class="dockhead"><span>Items</span><svg viewBox="0 0 26 12"><rect x=".5" y=".5" width="11" height="11" rx="2" fill="none" stroke="#666"/><path d="M5 2.500h4.500V7H7.500M2.500 5h4.500v4.500H2.500z" fill="none" stroke="#666"/><rect x="14.500" y=".5" width="11" height="11" rx="2" fill="none" stroke="#666"/><path d="M17.300 3.300l5.400 5.400M22.700 3.300l-5.400 5.400" stroke="#555" stroke-width="1.800"/></svg></div>
      <div class="list">
        <div class="lhead">
          <span class="c1"><svg width="20" height="14" viewBox="0 0 20 14"><path d="M1 7.500Q9.500-1 18.500 7.500 9.500 14 1 7.500z" fill="#eee" stroke="#888"/><path d="M1.500 4Q9.500-2 18 4" fill="none" stroke="#aaa"/><circle cx="9.800" cy="7" r="3.800" fill="#777"/><circle cx="9.800" cy="7" r="1.800" fill="#222"/></svg></span>
          <span class="c2"><svg width="16" height="19" viewBox="0 0 16 19"><path d="M3.500 9V6q0-4.500 4.500-4.500T12.500 6v3" fill="none" stroke="#777" stroke-width="2.400"/><path d="M3.500 9V6q0-4.500 4.500-4.500T12.500 6v3" fill="none" stroke="#ddd" stroke-width=".8"/><rect x=".5" y="8.500" width="15" height="10" rx="1" fill="#666" stroke="#555"/></svg></span>
          <span class="c3">Item</span>
        </div>
        <div class="row"><i class="cb"><svg><use href="#check"/></svg></i><i class="cb b2"></i><svg class="ri" viewBox="0 0 18 16"><rect x=".7" y="2.500" width="16.600" height="11" fill="#eee" stroke="#888"/><path d="M1.500 3.500h15v7L8 6 1.500 8.500z" fill="#444"/></svg><span class="r1">North Arrow</span></div>
        <div class="row"><i class="cb"><svg><use href="#check"/></svg></i><i class="cb b2"></i><svg class="ri" viewBox="0 0 18 16"><rect x=".5" y="5.500" width="17" height="5" rx="1" fill="#999"/><path d="M2 8h4M12 8h4" stroke="#333" stroke-width="3"/><path d="M7 8h4" stroke="#fff" stroke-width="2.500"/></svg><span class="r2">&lt;Scalebar&gt;</span></div>
        <div class="row"><i class="cb"><svg><use href="#check"/></svg></i><i class="cb b2"></i><svg class="ri tall" viewBox="0 0 18 18"><path d="M1 1h3.500v3.500H1zM1 7.300h3.500v3.500H1zM1 13.500h3.500V17H1z" fill="#ddd" stroke="#555" stroke-width="1.300"/><path d="M7 2.800h7M7 9h11M7 15.300h5" stroke="#aaa" stroke-width="1.500"/></svg><span class="r2">&lt;Legend&gt;</span></div>
        <div class="row cur"><i class="cb"><svg><use href="#check"/></svg></i><i class="cb b2"></i><svg class="ri" viewBox="0 0 18 16"><rect x=".5" y=".8" width="17" height="14" fill="#a2c8ea" stroke="#6a93b8"/><text x="9" y="12.500" class="tglyph blue">T</text></svg><span class="rb">Evergreens on a golf cour...</span></div>
        <div class="row"><i class="cb"><svg><use href="#check"/></svg></i><i class="cb b2"></i><svg class="ri" viewBox="2 1 20 21" preserveAspectRatio="none"><use href="#roll" width="24" height="24"/></svg><span class="r1">Map 1</span></div>
      </div>
      <div class="hsplit"><i></i></div>
      <div class="tabs"><span class="tab w67">Layout</span><span class="tab cur w118">Item Properties</span><span class="tab w68">Guides</span></div>
      <div class="dockhead h2"><span>Item Properties</span><svg viewBox="0 0 26 12"><rect x=".5" y=".5" width="11" height="11" rx="2" fill="none" stroke="#666"/><path d="M5 2.500h4.500V7H7.500M2.500 5h4.500v4.500H2.500z" fill="none" stroke="#666"/><rect x="14.500" y=".5" width="11" height="11" rx="2" fill="none" stroke="#666"/><path d="M17.300 3.300l5.400 5.400M22.700 3.300l-5.400 5.400" stroke="#555" stroke-width="1.800"/></svg></div>
      <div class="band">Label</div>
      <div class="scroll">
        <div class="form">
          <div class="ghead"><svg viewBox="0 0 12 8"><path d="M.5.500h11L6 7.500z" fill="#444" stroke="#222"/></svg>Main Properties</div>
          <div class="group g1">
            <div class="textarea">Evergreens on a golf course</div>
            <div class="chk"><i class="cb"></i><span>Render as HTML</span></div>
            <div class="btn"><span>Insert or Edit an Expression...</span></div>
          </div>
          <div class="ghead gh2"><svg viewBox="0 0 12 8"><path d="M.5.500h11L6 7.500z" fill="#444" stroke="#222"/></svg>Appearance</div>
          <div class="group g2">
            <div class="fontrow"><span class="fontbtn"><b>Font</b></span><span class="dropb"><svg class="car"><use href="#drop"/></svg></span></div>
            <div class="frow f1"><label>Font color</label><span class="colorbtn"><i></i></span><span class="dropb"><svg class="car"><use href="#drop"/></svg></span></div>
            <div class="frow f2"><label>Horizontal margin</label><span class="spin"><b>0.00 mm</b><em><svg viewBox="0 0 9 14"><path d="M0 5h9L4.500 0zM0 9h9l-4.500 5z" fill="#555"/></svg></em></span></div>
            <div class="frow f3"><label>Vertical margin</label><span class="spin"><b>0.00 mm</b><em><svg viewBox="0 0 9 14"><path d="M0 5h9L4.500 0zM0 9h9l-4.500 5z" fill="#555"/></svg></em></span></div>
            <div class="frow f4"><label>Horizontal alignment</label></div>
          </div>
        </div>
        <div class="sbar"><span class="up"><svg class="car" viewBox="0 0 9 5"><path d="M0 5h9L4.500 0z" fill="#555"/></svg></span><span class="thumb"></span><span class="track"></span><span class="down"><svg class="car"><use href="#drop"/></svg></span></div>
      </div>
    </aside>
  </div>

  <footer class="status">
    <span class="msg">1 item selected</span>
    <span class="st s1">x: 84.3213 mm</span><span class="st s2">y: 14.8569 mm</span><span class="st s3">page: 1</span>
    <span class="zoombox"><b>67.0%</b><svg class="car"><use href="#drop"/></svg></span>
    <span class="slider"><i></i></span>
    <i class="sizegrip"></i>
  </footer>
</div>
<script src="rulers.js"></script>
</body>
</html>
```
FILE: styles.css
```css
* { box-sizing: border-box; }
html, body { margin: 0; width: 1538px; height: 959px; overflow: hidden; }
body { font-family: "DejaVu Sans Condensed", "DejaVu Sans", sans-serif; font-size: 12px; color: #000; }
i, em, b { font-style: normal; font-weight: normal; }
svg { display: block; flex: none; }
.defs { position: absolute; }
.window { width: 1538px; height: 959px; display: flex; flex-direction: column; background: #efefef; border: 1px solid #6d6d6d; }

.titlebar, .menubar, .msg, .dockhead, .row { font-family: "Open Sans", "Noto Sans", sans-serif; }
.titlebar { height: 37px; background: #fff; display: flex; align-items: center; padding-left: 9px; }
.logo { width: 20px; height: 20px; margin-right: 5px; }
.title { font-size: 14px; letter-spacing: -.1px; flex: 1; }
.winbtns { display: flex; gap: 47px; padding-right: 24px; }
.winbtns svg { width: 12px; height: 12px; margin-top: -1px; }
.menubar { height: 25px; border-bottom: 1px solid #d2d2d2; display: flex; align-items: center; padding-left: 11px; font-size: 14px; color: #9c9c9c; }
.menubar u { text-underline-offset: 2px; }
.m1 { width: 59px; } .m2 { width: 41px; letter-spacing: .2px; } .m3 { width: 47px; letter-spacing: .3px; } .m4 { width: 51px; } .m5 { width: 77px; letter-spacing: .3px; } .m6 { width: 47px; letter-spacing: .2px; } .m7 { letter-spacing: .15px; }

.toolbar { display: flex; align-items: center; background: linear-gradient(#fafafa, #ececec); border-bottom: 1px solid #b2b2b2; }
.tb1 { height: 39px; } .tb2 { height: 38px; }
.ic { width: 24px; height: 24px; margin: 0 4.5px; overflow: visible; }
.faded { opacity: .35; filter: grayscale(.8); }
.ratio { font: bold 8.5px "Liberation Sans", sans-serif; text-anchor: middle; fill: #222; }
.grip { width: 5px; height: 17px; margin: 0 3.5px 0 6px; background: radial-gradient(circle at 1px 1px, #c6c6c6 .6px, transparent .9px) 0 0 / 3px 3px; flex: none; }
.grip.mid { margin: 0 6px 0 7px; }
.sep { flex: none; height: 19px; background: linear-gradient(#cfcfcf, #cfcfcf) center / 1px 100% no-repeat; }
.s8 { width: 8px; } .s10 { width: 10px; } .s6 { width: 6px; }
.pagebox { width: 80px; height: 30px; margin: 0 1.5px 0 .5px; border: 1px solid #a8a8a8; border-radius: 3px; background: #efefef; display: flex; align-items: center; color: #888; }
.pagebox b { flex: 1; padding-left: 4px; font-size: 12px; }
.pagebox em { width: 24px; height: 28px; background: linear-gradient(#fff, #f0f0f0); display: flex; align-items: center; padding-left: 6px; }
.car { width: 9px; height: 5px; }
.dd { width: 15px; padding-left: 2px; }

.main { display: flex; height: 788px; }
.tools { width: 40px; border-right: 1px solid #b2b2b2; background: linear-gradient(90deg, #fafafa, #ededed); display: flex; flex-direction: column; align-items: center; }
.hgrip, .hsplit i { width: 17px; height: 5px; background: radial-gradient(circle at 1px 1px, #c6c6c6 .6px, transparent .9px) 0 0 / 3px 3px; flex: none; }
.hgrip { margin: 7px 0 3px; }
.tool { width: 32px; height: 32px; flex: none; display: flex; align-items: center; justify-content: center; border: 1px solid transparent; border-radius: 3px; margin-left: 1px; }
.tool svg { width: 24px; height: 24px; overflow: visible; }
.tool.on { background: #dedede; border-color: #aeaeae; }
.tglyph { font: 12px "Liberation Serif", serif; text-anchor: middle; fill: #444; }
.tglyph.blue { fill: #274c74; font-weight: bold; }
.nglyph { font: bold 7px "Liberation Sans", sans-serif; text-anchor: middle; fill: #fff; }

.stage { width: 1099px; display: grid; grid-template: 25px 763px / 24px 1075px; }
.ruler-h { grid-column: 1 / 3; width: 1099px; height: 25px; background: #efefef; }
.ruler-v { width: 24px; height: 763px; background: #efefef; }
.ruler-h text, .ruler-v text { font: 12px "Open Sans", "Noto Sans", sans-serif; fill: #444; }
.canvas { width: 1075px; height: 763px; background: #d7d7d7; }
.park path { fill: #becf50; stroke: #4c5134; stroke-width: 1; }
.street path { fill: none; stroke: #ff9e17; stroke-opacity: .75; vector-effect: non-scaling-stroke; stroke-width: 1; }
.trees polyline { fill: none; stroke: none; }
.pine { marker: url(#mPine); }
.spruce { marker: url(#mSpruce); }
.maple { marker: url(#mMaple); }
.apple { marker: url(#mApple); }
.maptitle { font: 26px "Noto Sans", sans-serif; fill: #e3371a; }
.maptext { font-size: 12px; }
.handles { fill: #fff; stroke: #3d8fc4; }

.vsplit { width: 7px; display: flex; align-items: center; justify-content: center; }
.vsplit i { width: 2px; height: 17px; background: radial-gradient(circle at 1px 1px, #c6c6c6 .6px, transparent .9px) 0 0 / 3px 3px; }

.dock { width: 390px; display: flex; flex-direction: column; letter-spacing: .25px; }
.tabs { height: 30px; display: flex; align-items: flex-end; border-bottom: 1px solid #b8b8b8; flex: none; letter-spacing: .15px; }
.t-top { height: 31px; }
.tab { height: 27px; background: #dedede; border: 1px solid #b8b8b8; border-bottom: 0; border-left-width: 0; border-radius: 3px 3px 0 0; display: flex; align-items: center; justify-content: center; padding-top: 3px; }
.tab.cur { height: 30px; margin-bottom: -1px; background: linear-gradient(#fdfdfd, #efefef); border-left-width: 1px; }
.w62 { width: 63px; } .w102 { width: 101px; } .w67 { width: 67px; border-left-width: 1px; } .w118 { width: 119px; } .w68 { width: 67px; }
.dockhead { height: 20px; display: flex; align-items: center; justify-content: space-between; padding: 3px 2px 0 4px; font-size: 14px; line-height: 18px; flex: none; letter-spacing: 0; }
.dockhead svg { width: 26px; height: 12px; margin-top: -3px; }
.list { height: 195px; border: 1px solid #b8b8b8; background: #fff; flex: none; }
.lhead { height: 24px; border-bottom: 1px solid #b2b2b2; background: linear-gradient(#fcfcfc, #ececec); display: flex; }
.lhead span { display: flex; align-items: center; }
.c1 { width: 43px; padding-left: 2px; border-right: 1px solid #c8c8c8; }
.lhead .c2 { width: 43px; padding: 0 0 0 4px; border-right: 1px solid #c8c8c8; }
.c3 { padding: 0 0 2px 2px; }
.row { height: 22px; display: flex; align-items: center; padding-left: 3px; font-size: 14px; line-height: 20px; letter-spacing: .1px; }
.row span { margin-top: -2px; }
.r2 { letter-spacing: .35px; }
.row.cur { background: #efefef; }
.cb { width: 17px; height: 17px; border: 1px solid #b8b8b8; background: #fff; flex: none; margin-top: 1px; }
.cb svg { width: 17px; height: 17px; margin: -1px; }
.b2 { margin-left: 26px; }
.ri { width: 18px; height: 16px; margin: -1px 7px 0 27px; }
.ri.tall { height: 18px; }
.rb { font-weight: bold; letter-spacing: .1px; }
.hsplit { height: 7px; display: flex; justify-content: center; align-items: center; flex: none; }
.hsplit i { height: 2px; }
.h2 { height: 21px; }
.band { height: 20px; background: #c5c5c5; padding: 0 4px; line-height: 20px; font-weight: bold; flex: none; }
.scroll { flex: 1; min-height: 0; overflow: hidden; border: 1px solid #b8b8b8; display: flex; }
.form { width: 371px; padding: 11px 11px 0 12px; overflow: hidden; }
.ghead { display: flex; align-items: center; gap: 9px; height: 16px; font-weight: bold; font-size: 12.5px; letter-spacing: .1px; padding-left: 1px; }
.ghead svg { width: 12px; height: 8px; margin-top: 1px; }
.group { border: 1px solid #d6d6d6; border-radius: 2px; background: #ececec; padding: 12px; margin-top: 4px; }
.g1 { height: 236px; }
.textarea { height: 150px; border: 1px solid #b8b8b8; background: #fff; padding: 6px 4px; letter-spacing: .35px; }
.chk { display: flex; align-items: center; gap: 6px; margin: 7px 0 8px; height: 19px; letter-spacing: .5px; }
.btn, .fontbtn, .dropb, .colorbtn { border: 1px solid #a8a8a8; border-radius: 3px; background: linear-gradient(#fefefe, #ebebeb); }
.btn { height: 25px; display: flex; align-items: center; justify-content: center; }
.gh2 { margin-top: 7px; }
.g2 { height: 220px; }
.fontrow { display: flex; height: 33px; }
.fontbtn { flex: 1; overflow: hidden; padding-left: 6px; }
.fontbtn b { display: block; height: 29px; overflow: hidden; font: 38px/34px "Liberation Sans", sans-serif; letter-spacing: .6px; }
.dropb { width: 15px; display: flex; align-items: center; justify-content: center; }
.frow { display: flex; align-items: center; }
.frow label { width: 107px; white-space: nowrap; letter-spacing: .35px; }
.f1 { height: 26px; margin-top: 6px; } .f2 { height: 24px; margin-top: 7px; } .f3 { height: 24px; margin-top: 7px; } .f4 { height: 20px; margin-top: 5px; }
.f1 > span { height: 26px; }
.colorbtn { width: 105px; padding: 2px 4px; }
.colorbtn i { display: block; height: 20px; border-radius: 3px; background: #e3371a; }
.spin, .zoombox { border: 1px solid #a8a8a8; border-radius: 3px; background: #fff; display: flex; align-items: center; }
.spin { width: 214px; height: 23px; }
.spin b { flex: 1; padding-left: 4px; }
.spin em { width: 17px; height: 21px; border-left: 1px solid #a8a8a8; background: #f7f7f7; display: flex; align-items: center; justify-content: center; }
.spin em svg { width: 9px; height: 14px; }
.sbar { width: 17px; display: flex; flex-direction: column; border-left: 1px solid #b8b8b8; }
.sbar span { display: flex; align-items: center; justify-content: center; background: #f9f9f9; flex: none; }
.up, .thumb { border-bottom: 1px solid #b8b8b8; }
.up { height: 17px; } .thumb { height: 187px; }
.sbar .track { flex: 1; background: #e4e4e4; }
.down { height: 17px; border-top: 1px solid #b8b8b8; }

.status { height: 30px; display: flex; align-items: center; padding: 2px 0 0 6px; }
.msg { width: 957px; font-size: 14px; letter-spacing: .1px; }
.st { letter-spacing: .4px; }
.s1 { width: 106px; } .s2 { width: 106px; } .s3 { width: 106px; }
.zoombox { width: 123px; height: 24px; justify-content: space-between; padding: 0 9px 0 3px; }
.slider { width: 98px; height: 6px; margin: -2px 0 0 8px; border: 1px solid #b2b2b2; border-radius: 2px; background: #e4e4e4; display: flex; align-items: center; }
.slider i { width: 16px; height: 15px; margin-left: 4px; border: 1px solid #aaa; border-radius: 3px; background: #fcfcfc; flex: none; }
.sizegrip { width: 12px; height: 12px; margin: 14px 0 0 13px; background: radial-gradient(circle at 1px 1px, #b5b5b5 .6px, transparent .9px) 0 0 / 3px 3px; clip-path: polygon(100% 0, 100% 100%, 0 100%); }
```
FILE: rulers.js
```js
// Draws millimetre ticks and labels on the two layout rulers.
const NS = 'http://www.w3.org/2000/svg';
const STEP = 6.33; // pixels per 2 mm

function add(parent, name, attrs, text) {
  const el = document.createElementNS(NS, name);
  for (const key in attrs) el.setAttribute(key, attrs[key]);
  if (text !== undefined) el.textContent = text;
  parent.appendChild(el);
}

const h = document.getElementById('rulerH');
for (let i = -10; i * 2 <= 318; i++) {
  const x = Math.floor(131 + i * STEP) + 0.5;
  if (x > 1140) break;
  const top = i % 10 === 0 ? 141 : i % 5 === 0 ? 157 : 160;
  add(h, 'path', { d: `M${x} ${top}V165`, stroke: '#444' });
  if (i % 10 === 0) add(h, 'text', { x: x + 1.5, y: 155 }, i * 2);
}
add(h, 'path', { d: 'M398.500 141V165', stroke: '#f00' });

const v = document.getElementById('rulerV');
for (let i = -7; i * 2 <= 224; i++) {
  const y = Math.floor(213 + i * STEP) + 0.5;
  const left = i % 10 === 0 ? 41 : i % 5 === 0 ? 57 : 60;
  add(v, 'path', { d: `M${left} ${y}H65`, stroke: '#444' });
  if (i % 10 === 0) add(v, 'text', { transform: `translate(55 ${y + 3}) rotate(-90)`, 'text-anchor': 'end' }, i * 2);
}
add(v, 'path', { d: 'M41 925.500H65', stroke: '#f00' });
add(v, 'path', { d: 'M41 927.500H65', stroke: '#b2b2b2' });
```
